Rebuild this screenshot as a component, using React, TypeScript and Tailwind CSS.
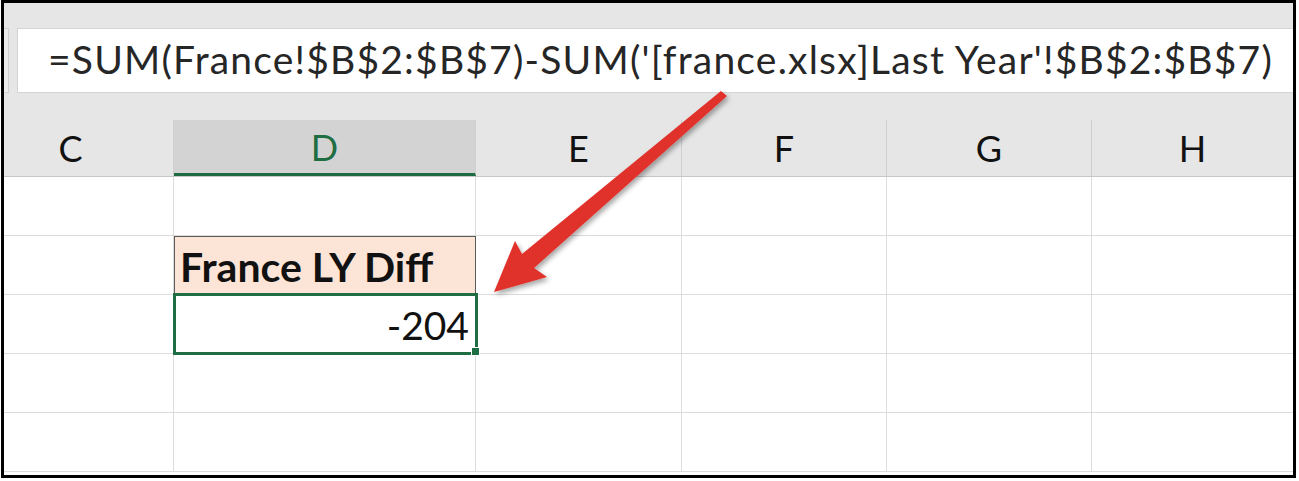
import React from 'react';

const cols = [
  { key: 'C', w: 'w-[170px]', pad: 'pr-[36px]' },
  { key: 'D', w: 'w-[302px]', pad: '' },
  { key: 'E', w: 'w-[206px]', pad: '' },
  { key: 'F', w: 'w-[205px]', pad: '' },
  { key: 'G', w: 'w-[205px]', pad: '' },
  { key: 'H', w: 'flex-1', pad: '' },
];

const formula = "=SUM(France!$B$2:$B$7)-SUM('[france.xlsx]Last Year'!$B$2:$B$7)";

// Red callout arrow pointing at the result cell
const Arrow: React.FC = () => (
  <svg
    className="absolute left-0 top-0 pointer-events-none"
    width={1299}
    height={481}
    viewBox="0 0 1299 481"
  >
    <defs>
      <filter id="shadow" x="-20%" y="-20%" width="140%" height="140%">
        <feDropShadow dx="2" dy="3" stdDeviation="2.5" floodColor="#000" floodOpacity="0.35" />
      </filter>
    </defs>
    <polygon
      points="721,91 522,254 515,241 494,292 547,277 534,268 727,96"
      fill="#e0302a"
      filter="url(#shadow)"
    />
  </svg>
);

const App: React.FC = () => {
  return (
    <div className="relative w-[1299px] h-[481px] bg-white overflow-hidden" style={{ fontFamily: 'Lato, "Liberation Sans", sans-serif' }}>
      <div className="ml-[1px] w-[1295px] h-[478px] border-[3px] border-black bg-[#e6e6e6] flex flex-col">
        {/* formula bar */}
        <div className="flex h-[90px] pt-[25px]">
          <div className="w-[5px] h-[65px] border-r border-y border-[#d0d0d0] bg-[#ececec]" />
          <div className="ml-[8px] flex-1 h-[65px] bg-white border border-[#d4d4d4] border-r-0 flex items-center pl-[30px] pb-[2px] text-[39px] text-[#262626] whitespace-nowrap tracking-[1.2px]">
            {formula}
          </div>
        </div>

        {/* column headers */}
        <div className="mt-[27px] flex h-[57px] border-b border-[#c6c6c6]">
          {cols.map((c) => (
            <div
              key={c.key}
              className={`${c.w} ${c.pad} h-full flex items-center justify-center text-[36px] border-r border-[#cfcfcf] last:border-r-0 ${
                c.key === 'D'
                  ? 'bg-[#d3d3d3] text-[#1f6e43] border-b-[3px] border-b-[#1d6b40]'
                  : 'text-[#111]'
              }`}
            >
              {c.key}
            </div>
          ))}
        </div>

        {/* grid */}
        <div className="flex-1 bg-white flex flex-col">
          {[0, 1, 2, 3, 4].map((r) => (
            <div key={r} className="flex h-[59px] border-b border-[#dcdcdc]">
              {cols.map((c) => {
                if (c.key === 'D' && r === 1) {
                  return (
                    <div
                      key={c.key}
                      className={`${c.w} h-full bg-[#fce4d6] border border-[#5a5a5a] flex items-end pl-[5px] pb-[6px] text-[41px] leading-none font-bold text-[#111] whitespace-nowrap`}
                    >
                      France LY Diff
                    </div>
                  );
                }
                if (c.key === 'D' && r === 2) {
                  return (
                    <div key={c.key} className={`${c.w} h-full relative`}>
                      <div className="absolute left-[-1px] top-[-2px] right-[-2px] bottom-[-2px] border-[3px] border-[#1f6e43] flex items-end justify-end pr-[6px] pb-[7px] text-[39px] leading-none text-[#111]">
                        -204
                      </div>
                      <div className="absolute right-[-4px] bottom-[-3px] w-[9px] h-[9px] bg-[#1f6e43] border border-white" />
                    </div>
                  );
                }
                return <div key={c.key} className={`${c.w} h-full border-r border-[#dcdcdc] last:border-r-0`} />;
              })}
            </div>
          ))}
        </div>
      </div>
      <Arrow />
    </div>
  );
};

export default App;
